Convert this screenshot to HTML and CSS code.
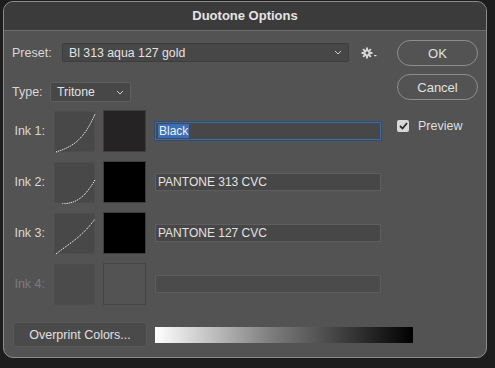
FILE: index.html
```html
<!DOCTYPE html>
<html lang="en">

<head>
    <meta charset="UTF-8">
    <title>Duotone Options</title>
    <link rel="stylesheet" href="styles.css">
</head>

<body>
    <div class="dialog">
        <div class="titlebar">Duotone Options</div>

        <div class="content">
            <div class="main">
                <div class="row preset-row">
                    <span class="label">Preset:</span>
                    <div class="select preset-select">
                        <span>Bl 313 aqua 127 gold</span>
                        <svg class="chevron" width="8" height="5" viewBox="0 0 8 5"><path d="M1 1 L4 4 L7 1" fill="none" stroke="#cfcfcf" stroke-width="1"/></svg>
                    </div>
                    <div class="gear">
                        <svg width="16" height="12" viewBox="0 0 16 12">
                            <g fill="#d6d6d6">
                                <circle cx="6" cy="6" r="3.6"/>
                                <rect x="5" y="0.5" width="2" height="11"/>
                                <rect x="0.5" y="5" width="11" height="2"/>
                                <rect x="5" y="0.5" width="2" height="11" transform="rotate(45 6 6)"/>
                                <rect x="5" y="0.5" width="2" height="11" transform="rotate(-45 6 6)"/>
                            </g>
                            <circle cx="6" cy="6" r="1.4" fill="#535353"/>
                            <rect x="13" y="8" width="2.5" height="1.2" fill="#d6d6d6"/>
                        </svg>
                    </div>
                </div>

                <div class="row type-row">
                    <span class="label">Type:</span>
                    <div class="select type-select">
                        <span>Tritone</span>
                        <svg class="chevron" width="8" height="5" viewBox="0 0 8 5"><path d="M1 1 L4 4 L7 1" fill="none" stroke="#cfcfcf" stroke-width="1"/></svg>
                    </div>
                </div>

                <div class="inks">
                    <div class="ink">
                        <span class="ink-label">Ink 1:</span>
                        <div class="curve">
                            <svg width="41" height="41" viewBox="0 0 41 41"><path d="M1 40 C 16 35, 28 30, 40 2" fill="none" stroke="#fff" stroke-width="1" stroke-dasharray="1.2 1"/></svg>
                        </div>
                        <div class="swatch ink1-swatch"></div>
                        <div class="field focused"><span class="sel">Black</span></div>
                    </div>

                    <div class="ink">
                        <span class="ink-label">Ink 2:</span>
                        <div class="curve">
                            <svg width="41" height="41" viewBox="0 0 41 41"><path d="M7 41 C 20 40, 28 37, 40 17" fill="none" stroke="#fff" stroke-width="1" stroke-dasharray="1.2 1"/></svg>
                        </div>
                        <div class="swatch black-swatch"></div>
                        <div class="field">PANTONE 313 CVC</div>
                    </div>

                    <div class="ink">
                        <span class="ink-label">Ink 3:</span>
                        <div class="curve">
                            <svg width="41" height="41" viewBox="0 0 41 41"><path d="M1 40 C 12 31, 26 24, 40 5" fill="none" stroke="#fff" stroke-width="1" stroke-dasharray="1.2 1"/></svg>
                        </div>
                        <div class="swatch black-swatch"></div>
                        <div class="field">PANTONE 127 CVC</div>
                    </div>

                    <div class="ink disabled">
                        <span class="ink-label">Ink 4:</span>
                        <div class="curve"></div>
                        <div class="swatch empty-swatch"></div>
                        <div class="field"></div>
                    </div>
                </div>

                <div class="row bottom-row">
                    <button class="overprint">Overprint Colors...</button>
                    <div class="ramp"></div>
                </div>
            </div>

            <div class="side">
                <button class="pill">OK</button>
                <button class="pill">Cancel</button>
                <label class="preview">
                    <span class="check">
                        <svg width="9" height="8" viewBox="0 0 9 8"><path d="M1 4 L3.5 6.5 L8 1" fill="none" stroke="#2b2b2b" stroke-width="1.8"/></svg>
                    </span>
                    Preview
                </label>
            </div>
        </div>
    </div>
</body>

</html>
```

FILE: styles.css
```css
body {
    margin: 0;
    padding: 0;
    background: #1d1d1d;
    font-family: "Liberation Sans", Arial, sans-serif;
    color: #dcdcdc;
    height: 368px;
    overflow: hidden;
}

.dialog {
    margin: 1px 0 0 3px;
    width: 482px;
    height: 355px;
    border: 1px solid #8c8c8c;
    border-radius: 10px;
    background: #535353;
    overflow: hidden;
}

.titlebar {
    height: 28px;
    line-height: 28px;
    background: #3b3b3b;
    border-bottom: 1px solid #6d6d6d;
    text-align: center;
    font-weight: bold;
    font-size: 13px;
    color: #e4e4e4;
}

.content {
    display: flex;
}

.main {
    width: 385px;
    padding-left: 8px;
    flex-shrink: 0;
}

.row {
    display: flex;
    align-items: center;
}

.label {
    font-size: 12.5px;
    color: #d8d8d8;
}

.preset-row {
    margin-top: 12px;
    height: 19px;
}

.preset-row .label {
    width: 50px;
}

.select {
    display: flex;
    align-items: center;
    justify-content: space-between;
    box-sizing: border-box;
    background: #474747;
    border: 1px solid #3d3d3d;
    border-radius: 2px;
    font-size: 12.3px;
    color: #e2e2e2;
    padding: 0 6px;
}

.preset-select {
    width: 287px;
    height: 19px;
}

.gear {
    margin-left: 12px;
    display: flex;
}

.type-row {
    margin-top: 20px;
    height: 20px;
}

.type-row .label {
    width: 38px;
}

.type-select {
    width: 81px;
    height: 20px;
    border-color: #5f5f5f;
}

.inks {
    margin-top: 8px;
    display: flex;
    flex-direction: column;
    gap: 9px;
}

.ink {
    display: flex;
    align-items: center;
    height: 42px;
}

.ink-label {
    width: 33px;
    text-align: right;
    font-size: 12.5px;
    color: #d8d8d8;
    margin-right: 9px;
}

.curve {
    width: 41px;
    height: 41px;
    background: #484848;
    border: 1px solid #4d4d4d;
    box-sizing: border-box;
}

.curve svg {
    display: block;
}

.swatch {
    width: 43px;
    height: 42px;
    margin-left: 8px;
    box-sizing: border-box;
    border: 1px solid #3c3c3c;
}

.ink1-swatch {
    background: #252323;
}

.black-swatch {
    background: #000;
}

.empty-swatch {
    background: #535353;
    border-color: #444;
}

.field {
    width: 226px;
    height: 18px;
    margin-left: 9px;
    box-sizing: border-box;
    background: #474747;
    border: 1px solid #5e5e5e;
    font-size: 12px;
    color: #e2e2e2;
    padding-left: 2px;
    line-height: 16px;
}

.field.focused {
    border: 1px solid #3d6aa6;
    box-shadow: 0 0 0 1px #2c4d78;
}

.sel {
    background: #3c6fb8;
    color: #f2f2f2;
    padding: 0 1px;
}

.disabled .ink-label {
    color: #7b7b7b;
}

.disabled .curve {
    background: #4b4b4b;
}

.disabled .field {
    background: #4b4b4b;
    border-color: #5c5c5c;
}

.bottom-row {
    margin-top: 17px;
}

.overprint {
    width: 134px;
    height: 25px;
    margin-left: 1px;
    flex-shrink: 0;
    background: #4a4a4a;
    border: 1px solid #5a5a5a;
    border-radius: 3px;
    font-family: inherit;
    font-size: 12.5px;
    color: #e0e0e0;
}

.ramp {
    width: 258px;
    height: 16px;
    margin-left: 8px;
    flex-shrink: 0;
    background: linear-gradient(90deg, #fff, #7d7d7d 45%, #000 100%);
}

.side {
    display: flex;
    flex-direction: column;
    padding-top: 9px;
}

.pill {
    width: 81px;
    height: 26px;
    background: transparent;
    border: 1px solid #8d8d8d;
    border-radius: 13px;
    font-family: inherit;
    font-size: 13px;
    color: #e0e0e0;
    margin-bottom: 8px;
}

.preview {
    display: flex;
    align-items: center;
    margin-top: 11px;
    font-size: 12.5px;
    color: #dedede;
}

.check {
    width: 12px;
    height: 12px;
    background: #d8d8d8;
    border-radius: 2px;
    margin-right: 9px;
    display: flex;
    align-items: center;
    justify-content: center;
}
```
